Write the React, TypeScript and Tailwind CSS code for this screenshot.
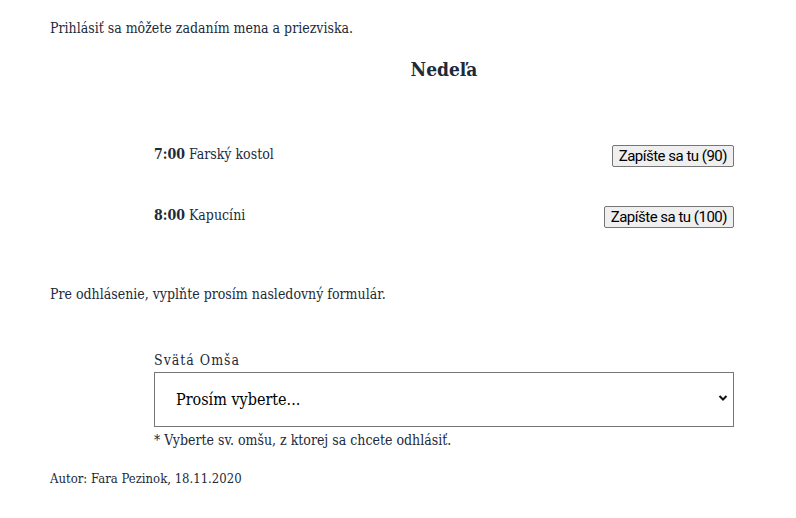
export default function App() {
  const slab = { fontFamily: '"DejaVu Serif", serif', fontStretch: 'semi-condensed' };
  const btn = { fontFamily: 'Roboto, sans-serif', fontStretch: 'normal' };
  return (
    <div className="min-h-[518px] bg-white text-[#1c2a3a] pl-[50px] pr-[62px]" style={slab}>
      <p className="pt-[18px] text-[14px] leading-5">Prihlásiť sa môžete zadaním mena a priezviska.</p>
      <div className="ml-[104px]">
        <h2 className="mt-[17px] text-center text-[19px] font-bold leading-7">Nedeľa</h2>
        <div className="mt-[58px] flex flex-col gap-[35px]">
          <div className="flex items-center justify-between">
            <span className="text-[14px] leading-5"><b>7:00</b> Farský kostol</span>
            <button className="mt-[4px] h-[22px] px-[6px] rounded-[2px] border border-[#767676] bg-[#efefef] text-[15px] tracking-[-0.5px] text-black leading-none" style={btn}>
              Zapíšte sa tu (90)
            </button>
          </div>
          <div className="flex items-center justify-between">
            <span className="text-[14px] leading-5"><b>8:00</b> Kapucíni</span>
            <button className="mt-[4px] h-[22px] px-[6px] rounded-[2px] border border-[#767676] bg-[#efefef] text-[15px] tracking-[-0.5px] text-black leading-none" style={btn}>
              Zapíšte sa tu (100)
            </button>
          </div>
        </div>
      </div>
      <p className="mt-[56px] text-[14px] leading-5">Pre odhlásenie, vyplňte prosím nasledovný formulár.</p>
      <div className="ml-[104px] mt-[46px]">
        <label className="block text-[14px] tracking-[1px] leading-5">Svätá Omša</label>
        <div className="relative mt-[2px] h-[55px] border border-[#767676] bg-white flex items-center pl-[21px]">
          <span className="text-[16px] text-black">Prosím vyberte...</span>
          <svg className="absolute right-[5px] top-[21px]" width="10" height="8" viewBox="0 0 10 8">
            <path d="M1.5 2 L5 5.5 L8.5 2" fill="none" stroke="#111" strokeWidth="2" />
          </svg>
        </div>
        <p className="mt-[3px] text-[14px] leading-5">* Vyberte sv. omšu, z ktorej sa chcete odhlásiť.</p>
      </div>
      <p className="mt-[19px] text-[13px] leading-5">Autor: Fara Pezinok, 18.11.2020</p>
    </div>
  );
}
